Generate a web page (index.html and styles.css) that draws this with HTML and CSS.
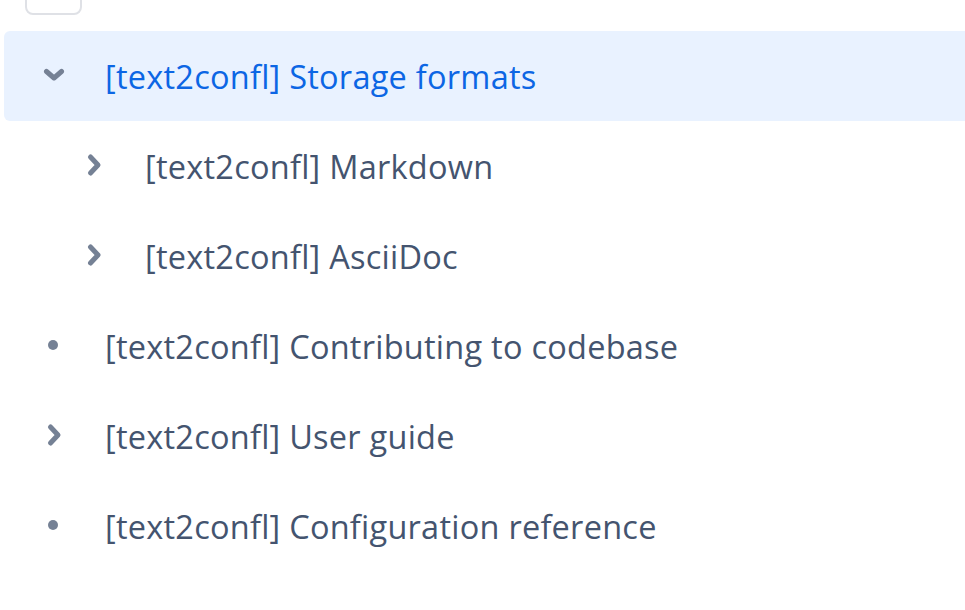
FILE: index.html
```html
<!DOCTYPE html>
<html>
<head>
<meta charset="utf-8">
<link rel="stylesheet" href="styles.css">
</head>
<body>
<div class="page">
  <div class="topbox"></div>
  <ul class="tree">
    <li class="row selected">
      <span class="icon"><svg class="down" width="24" height="14" viewBox="0 0 24 14"><path d="M4.5 3.5 L12 10 L19.5 3.5" fill="none" stroke="#758195" stroke-width="5" stroke-linecap="round" stroke-linejoin="round"/></svg></span>
      <span class="label">[text2confl] Storage formats</span>
    </li>
    <li class="row level1">
      <span class="icon"><svg class="right" width="18" height="24" viewBox="0 0 18 24"><path d="M4.5 4 L12 12 L4.5 20" fill="none" stroke="#758195" stroke-width="5" stroke-linecap="round" stroke-linejoin="round"/></svg></span>
      <span class="label">[text2confl] Markdown</span>
    </li>
    <li class="row level1">
      <span class="icon"><svg class="right" width="18" height="24" viewBox="0 0 18 24"><path d="M4.5 4 L12 12 L4.5 20" fill="none" stroke="#758195" stroke-width="5" stroke-linecap="round" stroke-linejoin="round"/></svg></span>
      <span class="label">[text2confl] AsciiDoc</span>
    </li>
    <li class="row">
      <span class="icon"><span class="dot"></span></span>
      <span class="label">[text2confl] Contributing to codebase</span>
    </li>
    <li class="row">
      <span class="icon"><svg class="right" width="18" height="24" viewBox="0 0 18 24"><path d="M4.5 4 L12 12 L4.5 20" fill="none" stroke="#758195" stroke-width="5" stroke-linecap="round" stroke-linejoin="round"/></svg></span>
      <span class="label">[text2confl] User guide</span>
    </li>
    <li class="row">
      <span class="icon"><span class="dot"></span></span>
      <span class="label">[text2confl] Configuration reference</span>
    </li>
  </ul>
</div>
</body>
</html>
```

FILE: styles.css
```css
html, body {
  margin: 0;
  padding: 0;
  background: #ffffff;
}
body {
  font-family: "Open Sans", "Noto Sans", "Liberation Sans", sans-serif;
  overflow: hidden;
}
.page {
  width: 965px;
  height: 610px;
  overflow: hidden;
}
.topbox {
  margin-left: 25px;
  margin-top: -12px;
  width: 53px;
  height: 23px;
  border: 2px solid #dfe1e6;
  border-radius: 8px;
}
.tree {
  list-style: none;
  margin: 16px 0 0 4px;
  padding: 0;
}
.row {
  display: flex;
  align-items: center;
  height: 90px;
  padding-left: 36px;
  color: #44546f;
  font-size: 32.5px;
  border-radius: 6px 0 0 6px;
}
.row.selected {
  background: #e9f2ff;
  color: #0c66e4;
}
.row.level1 {
  padding-left: 76px;
}
.icon {
  width: 65px;
  flex: none;
  display: flex;
  align-items: center;
  margin-top: -3px;
}
.down {
  margin-left: 2px;
}
.right {
  margin-left: 6px;
}
.dot {
  display: block;
  width: 10px;
  height: 10px;
  margin-left: 8px;
  border-radius: 50%;
  background: #758195;
}
.label {
  white-space: nowrap;
  letter-spacing: 0.25px;
}
```
